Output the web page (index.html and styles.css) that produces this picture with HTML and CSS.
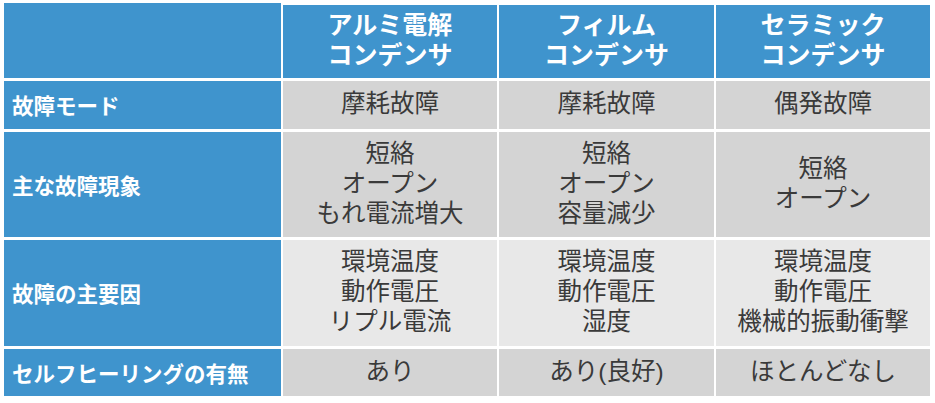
FILE: index.html
```html
<!DOCTYPE html>
<html lang="ja">
<head>
<meta charset="utf-8">
<link rel="stylesheet" href="styles.css">
</head>
<body>
<div class="sheet">
  <div class="grid">
    <div class="cell corner"></div>
    <div class="cell head"><div class="ln">アルミ電解</div><div class="ln">コンデンサ</div></div>
    <div class="cell head"><div class="ln">フィルム</div><div class="ln">コンデンサ</div></div>
    <div class="cell head"><div class="ln">セラミック</div><div class="ln">コンデンサ</div></div>

    <div class="cell label">故障モード</div>
    <div class="cell data dark"><div class="ln">摩耗故障</div></div>
    <div class="cell data dark"><div class="ln">摩耗故障</div></div>
    <div class="cell data dark"><div class="ln">偶発故障</div></div>

    <div class="cell label">主な故障現象</div>
    <div class="cell data dark"><div class="ln">短絡</div><div class="ln">オープン</div><div class="ln">もれ電流増大</div></div>
    <div class="cell data dark"><div class="ln">短絡</div><div class="ln">オープン</div><div class="ln">容量減少</div></div>
    <div class="cell data dark"><div class="ln">短絡</div><div class="ln">オープン</div></div>

    <div class="cell label">故障の主要因</div>
    <div class="cell data light"><div class="ln">環境温度</div><div class="ln">動作電圧</div><div class="ln">リプル電流</div></div>
    <div class="cell data light"><div class="ln">環境温度</div><div class="ln">動作電圧</div><div class="ln">湿度</div></div>
    <div class="cell data light"><div class="ln">環境温度</div><div class="ln">動作電圧</div><div class="ln">機械的振動衝撃</div></div>

    <div class="cell label">セルフヒーリングの有無</div>
    <div class="cell data dark"><div class="ln">あり</div></div>
    <div class="cell data dark"><div class="ln">あり(良好)</div></div>
    <div class="cell data dark"><div class="ln">ほとんどなし</div></div>
  </div>
</div>
</body>
</html>
```

FILE: styles.css
```css
html, body {
  margin: 0;
  padding: 0;
  background: #ffffff;
}

.sheet {
  padding: 5px 0 0 4px;
  font-family: "Noto Sans CJK JP", "Noto Sans", sans-serif;
}

.grid {
  display: grid;
  grid-template-columns: 277px 214px 215px 214px;
  grid-template-rows: 73px 48px 105px 106px 47px;
  column-gap: 2px;
  row-gap: 3px;
}

.cell {
  display: flex;
  box-sizing: border-box;
}

.corner {
  background: #3f94cd;
  margin-top: -2px;
}

.head,
.data {
  flex-direction: column;
  justify-content: center;
  align-items: center;
  text-align: center;
  font-family: "Liberation Sans", "Noto Sans CJK JP", sans-serif;
}

.ln {
  height: 30px;
  line-height: 30px;
  white-space: nowrap;
}

.head {
  background: #3f94cd;
  color: #ffffff;
  font-weight: 700;
  font-size: 25px;
  padding-bottom: 3px;
}

.label {
  align-items: center;
  background: #3f94cd;
  color: #ffffff;
  font-weight: 700;
  font-size: 21.5px;
  line-height: 28px;
  padding-left: 8px;
  white-space: nowrap;
}

.data {
  color: #3a3a3a;
  font-size: 24.5px;
  padding-bottom: 2px;
}

.dark {
  background: #d4d4d4;
}

.light {
  background: #e8e8e8;
}
```
